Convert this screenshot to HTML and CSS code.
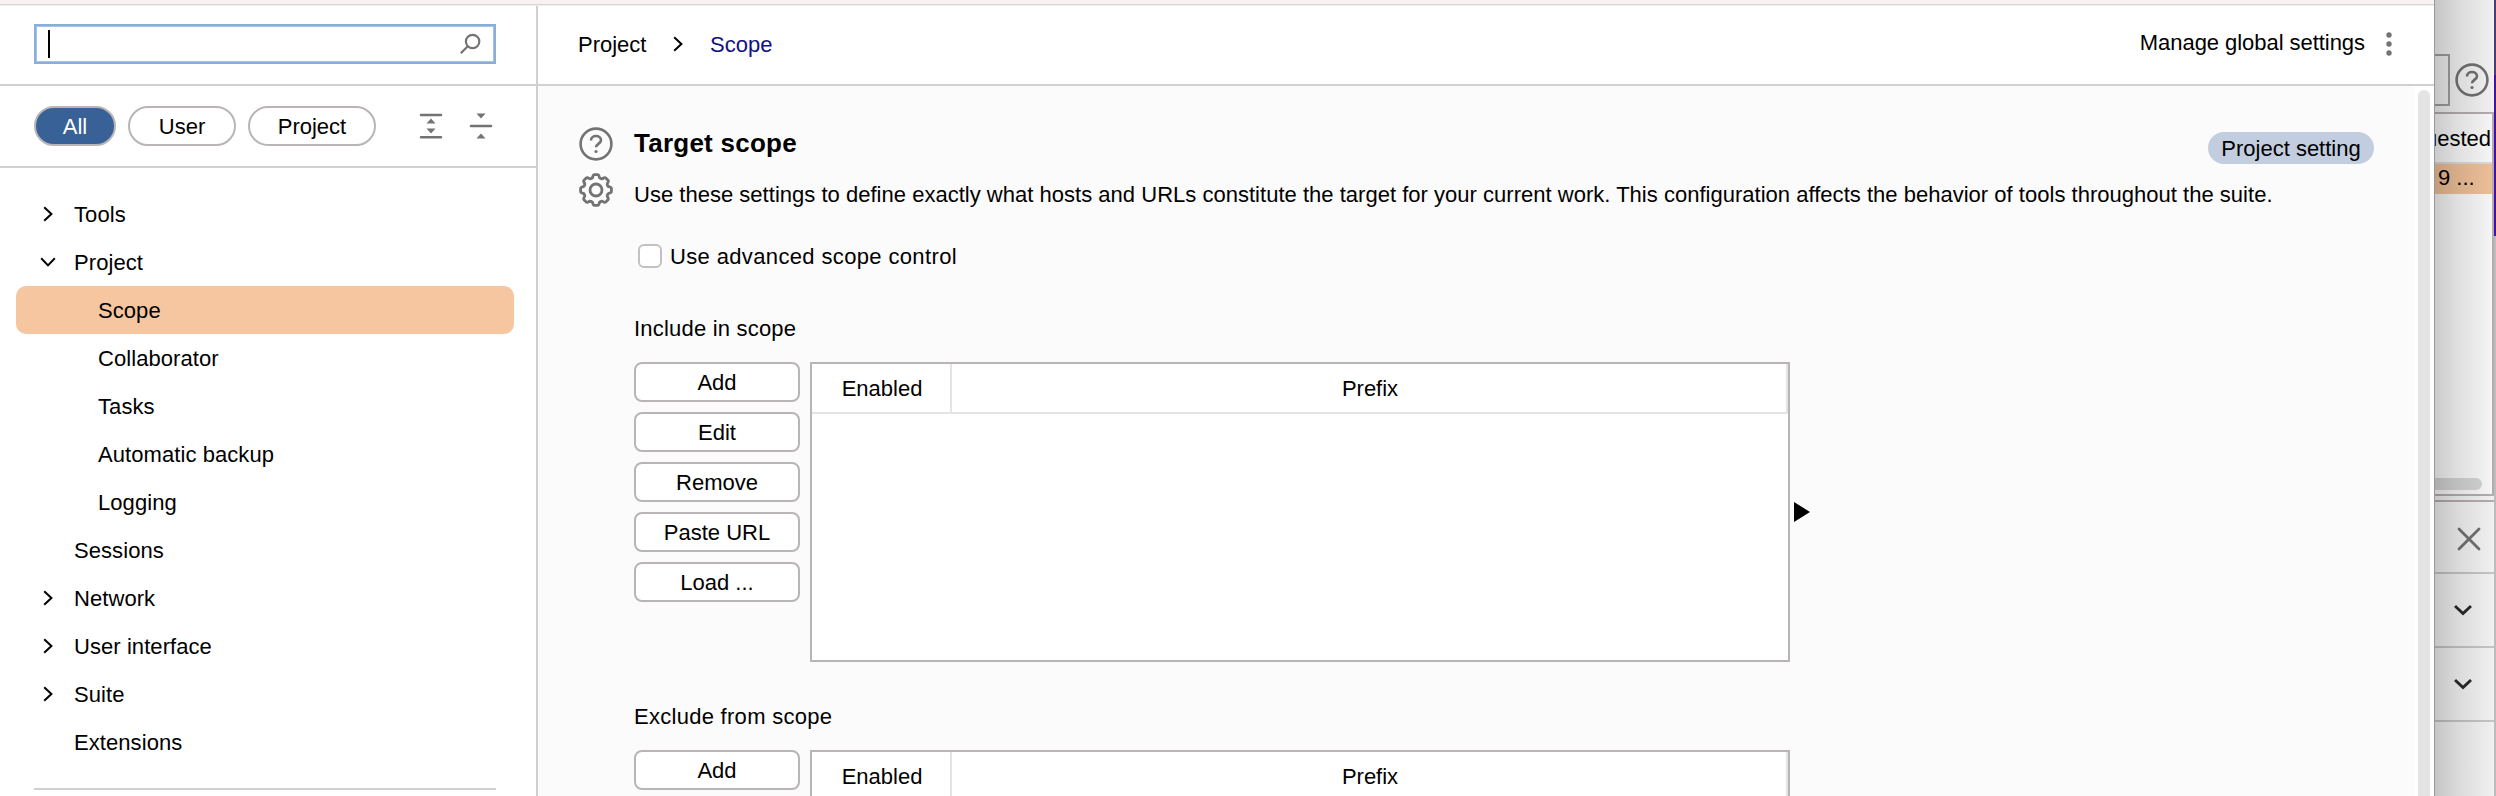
FILE: index.html
```html
<!DOCTYPE html>
<html lang="en">
<head>
<meta charset="utf-8">
<title>Settings</title>
<link rel="stylesheet" href="styles.css">
</head>
<body>
<svg class="defs" aria-hidden="true">
  <symbol id="right" viewBox="0 0 10 16"><path d="M1.2 1.2 8.4 8 1.2 14.8"/></symbol>
  <symbol id="down" viewBox="0 0 16 10"><path d="M1.2 1.2 8 8.4 14.8 1.2"/></symbol>
  <symbol id="help" viewBox="0 0 34 34"><circle cx="17" cy="17" r="15.4"/><path d="M12 13.4C12 10.6 14.2 9 17 9s5 1.7 5 4.2c0 3.4-4.9 3.4-4.9 7.1"/><circle class="dot" cx="17" cy="24.5" r="1.6"/></symbol>
  <defs><path id="tooth" d="M-3.4-12.6Q-2.9-15.4-1.6-15.4H1.6Q2.9-15.4 3.4-12.6Q4.5-10.9 6.51-11.31"/></defs>
</svg>
<div class="screen">
  <div class="dialog">
    <div class="titlebar"></div>
    <div class="panes">
      <aside class="sidebar">
        <div class="search-row">
          <div class="search"><span class="caret"></span>
            <svg class="mag" width="22" height="22" viewBox="0 0 22 22"><circle cx="13.6" cy="8.5" r="6.7"/><path d="M8.8 13.3 1.8 20.3"/></svg>
          </div>
        </div>
        <div class="filters">
          <button class="pill all">All</button>
          <button class="pill user">User</button>
          <button class="pill project">Project</button>
          <svg class="expand" width="24" height="28" viewBox="0 0 24 28"><path class="bar" d="M2 3h20M2 25.3h20"/><path class="tri" d="M7.5 11.5 12 6.4l4.5 5.1zM7.5 16.5h9L12 21.6z"/></svg>
          <svg class="collapse" width="24" height="28" viewBox="0 0 24 28"><path class="bar" d="M2 14h20"/><path class="tri" d="M7.5 1.4h9L12 6.5zM7.5 26.6 12 21.5l4.5 5.1z"/></svg>
        </div>
        <ul class="tree">
          <li><svg class="chev"><use href="#right"/></svg><span>Tools</span></li>
          <li><svg class="chev open"><use href="#down"/></svg><span>Project</span></li>
          <li class="child selected"><span>Scope</span></li>
          <li class="child"><span>Collaborator</span></li>
          <li class="child"><span>Tasks</span></li>
          <li class="child"><span>Automatic backup</span></li>
          <li class="child"><span>Logging</span></li>
          <li><span>Sessions</span></li>
          <li><svg class="chev"><use href="#right"/></svg><span>Network</span></li>
          <li><svg class="chev"><use href="#right"/></svg><span>User interface</span></li>
          <li><svg class="chev"><use href="#right"/></svg><span>Suite</span></li>
          <li><span>Extensions</span></li>
        </ul>
        <div class="rule"></div>
      </aside>
      <main class="main">
        <header class="crumbs">
          <span class="crumb">Project</span>
          <svg class="sep"><use href="#right"/></svg>
          <span class="current">Scope</span>
          <span class="manage">Manage global settings</span>
          <svg class="kebab" width="6" height="26" viewBox="0 0 6 26"><circle cx="3" cy="4" r="2.7"/><circle cx="3" cy="13" r="2.7"/><circle cx="3" cy="22" r="2.7"/></svg>
        </header>
        <div class="body">
          <section class="content">
            <div class="icons">
              <svg class="help"><use href="#help"/></svg>
              <svg class="gear" width="36" height="36" viewBox="-18 -18 36 36"><circle r="6"/><use href="#tooth"/><use href="#tooth" transform="rotate(45)"/><use href="#tooth" transform="rotate(90)"/><use href="#tooth" transform="rotate(135)"/><use href="#tooth" transform="rotate(180)"/><use href="#tooth" transform="rotate(225)"/><use href="#tooth" transform="rotate(270)"/><use href="#tooth" transform="rotate(315)"/></svg>
            </div>
            <div class="fields">
              <div class="title-row"><h1>Target scope</h1><span class="badge">Project setting</span></div>
              <p class="desc">Use these settings to define exactly what hosts and URLs constitute the target for your current work. This configuration affects the behavior of tools throughout the suite.</p>
              <div class="check"><span class="box"></span><span class="check-label">Use advanced scope control</span></div>
              <h2>Include in scope</h2>
              <div class="group">
                <div class="buttons">
                  <button>Add</button><button>Edit</button><button>Remove</button><button>Paste URL</button><button>Load ...</button>
                </div>
                <div class="table"><div class="thead"><span class="enabled">Enabled</span><span class="prefix">Prefix</span></div></div>
                <svg class="arrow" width="16" height="20" viewBox="0 0 16 20"><path d="M0 0 16 10 0 20z"/></svg>
              </div>
              <h2 class="second">Exclude from scope</h2>
              <div class="group">
                <div class="buttons"><button>Add</button></div>
                <div class="table"><div class="thead"><span class="enabled">Enabled</span><span class="prefix">Prefix</span></div></div>
              </div>
            </div>
          </section>
          <div class="scroll"><div class="thumb"></div></div>
        </div>
      </main>
    </div>
  </div>
  <div class="behind">
    <div class="toolbar"><span class="combo"></span><svg class="help"><use href="#help"/></svg></div>
    <div class="list">
      <div class="col-head"><span>uested</span></div>
      <div class="row">9 ...</div>
      <div class="hthumb"></div>
    </div>
    <div class="splitter"></div>
    <div class="cell close"><svg width="24" height="24" viewBox="0 0 24 24"><path d="M2 2 22 22M22 2 2 22"/></svg></div>
    <div class="cell"><svg class="drop" width="18" height="12" viewBox="0 0 18 12"><path d="M1 2 9 9.5 17 2"/></svg></div>
    <div class="cell"><svg class="drop" width="18" height="12" viewBox="0 0 18 12"><path d="M1 2 9 9.5 17 2"/></svg></div>
    <div class="shade"></div>
    <div class="edge"><i class="top"></i><i class="mid"></i><i class="low"></i></div>
  </div>
</div>
</body>
</html>
```
FILE: styles.css
```css
* { box-sizing: border-box; }
body {
  margin: 0;
  overflow: hidden;
  color: #000;
  font: 22px/28px "Liberation Sans", Arial, sans-serif;
}
svg { display: block; flex: none; fill: none; stroke: #737373; stroke-width: 2.6; }
button {
  font: inherit;
  color: inherit;
  padding: 2px 0 0;
  background: #fff;
  border: 2px solid #b9b4b6;
}
h1, h2, p, ul { margin: 0; padding: 0; list-style: none; }
.defs { position: absolute; width: 0; height: 0; }
.dot { fill: #737373; stroke: none; }

.screen { display: flex; width: 2496px; height: 796px; overflow: hidden; }
.dialog { flex: none; display: flex; flex-direction: column; width: 2434px; height: 796px; background: #fff; }
.titlebar { flex: none; height: 6px; background: #f8f2f0; box-shadow: inset 0 -1px #f1f0f1, inset 0 -2px #d6d5d8; }
.panes { flex: 1; display: flex; min-height: 0; }

.sidebar { flex: none; width: 538px; border-right: 2px solid #d0d0d0; overflow: hidden; }
.search-row { height: 80px; padding: 18px 40px 20px 34px; border-bottom: 2px solid #d0d0d0; }
.search {
  display: flex;
  justify-content: space-between;
  height: 40px;
  padding: 4px 12px 0;
  border: 2px solid #8badda;
  box-shadow: inset 0 0 0 1px #a5c4ec;
}
.caret { width: 2px; height: 28px; background: #000; }
.mag { margin: 3px 1px 0 0; stroke-width: 2.2; }
.filters { display: flex; align-items: center; height: 82px; padding-left: 34px; border-bottom: 2px solid #d0d0d0; }
.pill { height: 40px; border-radius: 20px; margin-right: 12px; }
.all { width: 82px; color: #fff; background: #386297; }
.user { width: 108px; }
.project { width: 128px; }
.expand { margin: 0 26px 0 31px; }
.bar { stroke-linecap: round; }
.tri { fill: #737373; stroke: none; }
.tree { padding: 22px 22px 0 16px; }
.tree li { display: flex; align-items: center; height: 48px; padding-left: 58px; }
.tree li.child { padding-left: 82px; }
.tree span { padding-top: 2px; letter-spacing: .07px; }
.tree .selected { background: #f6c6a0; border-radius: 10px; }
.chev { width: 10px; height: 16px; margin: 0 21px 0 -31px; stroke: #000; stroke-width: 2; }
.chev.open { width: 16px; height: 10px; margin: 0 18px 0 -34px; }
.rule { height: 2px; margin: 22px 40px 0 34px; background: #d0d0d0; }

.main { flex: 1; display: flex; flex-direction: column; min-width: 0; }
.crumbs { flex: none; display: flex; align-items: center; height: 80px; padding: 0 42px 2px 40px; border-bottom: 2px solid #d0d0d0; }
.sep { width: 10px; height: 16px; margin: 0 27px; stroke: #000; stroke-width: 2; }
.crumb { width: 68px; padding-top: 2px; }
.current { padding-top: 2px; color: #11117f; }
.manage { margin: -3px 21px 0 auto; letter-spacing: -.05px; }
.kebab { margin-top: -1px; fill: #737373; stroke: none; }
.body { flex: 1; display: flex; min-height: 0; overflow: hidden; }
.content { flex: 1; display: flex; min-width: 0; background: #fbfbfb; }
.icons { width: 96px; padding: 41px 0 0 40px; }
.help { width: 34px; height: 34px; }
.icons .help { margin-left: 1px; }
.gear { margin-top: 11px; stroke-width: 2.8; stroke-linecap: round; }
.fields { flex: 1; padding-right: 40px; }
.title-row { display: flex; justify-content: space-between; height: 78px; }
h1 { margin-top: 43px; font-size: 26px; line-height: 28px; font-weight: 700; letter-spacing: .25px; }
.badge { width: 166px; height: 32px; margin-top: 46px; padding-top: 1px; border-radius: 16px; background: #c2cedf; text-align: center; line-height: 32px; }
.desc { margin-top: 17px; white-space: nowrap; letter-spacing: .018px; }
.check { display: flex; align-items: center; height: 28px; margin: 33px 0 0 4px; }
.check-label { padding-top: 2px; letter-spacing: .36px; }
.box { width: 24px; height: 24px; margin-right: 8px; border: 2px solid #c4c1c2; border-radius: 6px; background: #fff; }
h2 { margin-top: 45px; font-size: 22px; font-weight: 400; line-height: 28px; letter-spacing: .2px; }
h2.second { margin-top: 41px; letter-spacing: .28px; }
.group { display: flex; margin-top: 19px; }
.buttons { width: 166px; margin-right: 10px; display: flex; flex-direction: column; gap: 10px; }
.buttons button { height: 40px; border-radius: 8px; }
.table { width: 980px; height: 300px; border: 2px solid #b9b4b6; background: #fff; }
.thead { display: flex; height: 50px; border-bottom: 2px solid #e4e4e4; text-align: center; line-height: 50px; }
.thead span { height: 48px; padding-left: 2px; }
.enabled { width: 140px; border-right: 2px solid #e4e4e4; }
.prefix { flex: 1; border-right: 2px solid #e4e4e4; }
.arrow { margin: 140px 0 0 4px; fill: #000; stroke: none; }
.scroll { width: 20px; padding: 4px 4px 0; background: #fff; }
.thumb { height: 760px; border-radius: 6px; background: #e4e4e4; }

.behind { position: relative; flex: none; width: 62px; height: 796px; overflow: hidden; background: #f7f7f7; }
.toolbar { display: flex; height: 112px; padding-top: 54px; }
.combo { width: 16px; height: 52px; margin-right: 5px; border: solid #a2a2a2; border-width: 2px 2px 2px 0; }
.toolbar .help { margin-top: 9px; }
.list { width: 60px; height: 384px; border: solid #b9b0b4; border-width: 2px 2px 2px 0; background: #fdfdfd; }
.col-head { display: flex; justify-content: flex-end; height: 50px; padding-right: 1px; border-bottom: 2px solid #dedede; line-height: 50px; overflow: hidden; }
.row { height: 30px; padding-left: 4px; background: #f3c49c; line-height: 28px; }
.hthumb { width: 48px; height: 12px; margin-top: 284px; border-radius: 0 6px 6px 0; background: #d8d8d8; }
.splitter { height: 6px; width: 60px; border-bottom: 2px solid #b9b0b4; }
.cell { display: flex; align-items: center; height: 74px; width: 60px; padding-left: 20px; border-bottom: 2px solid #c9c9c9; }
.close { height: 72px; padding: 3px 0 0 23px; }
.close svg { stroke-width: 2.8; stroke-linecap: round; }
.drop { stroke: #2b2b2b; stroke-width: 3; }
.shade { position: absolute; inset: 0; border-left: 1px solid #999; background: linear-gradient(to right, rgba(0,0,0,.2), rgba(0,0,0,.12) 35%, rgba(0,0,0,.02)); }
.edge { position: absolute; top: 0; right: 0; width: 2px; height: 796px; display: flex; flex-direction: column; }
.top { height: 75px; background: #4d3c7a; }
.mid { height: 161px; background: #4210ad; }
.low { flex: 1; background: #bcbcbc; }
```
